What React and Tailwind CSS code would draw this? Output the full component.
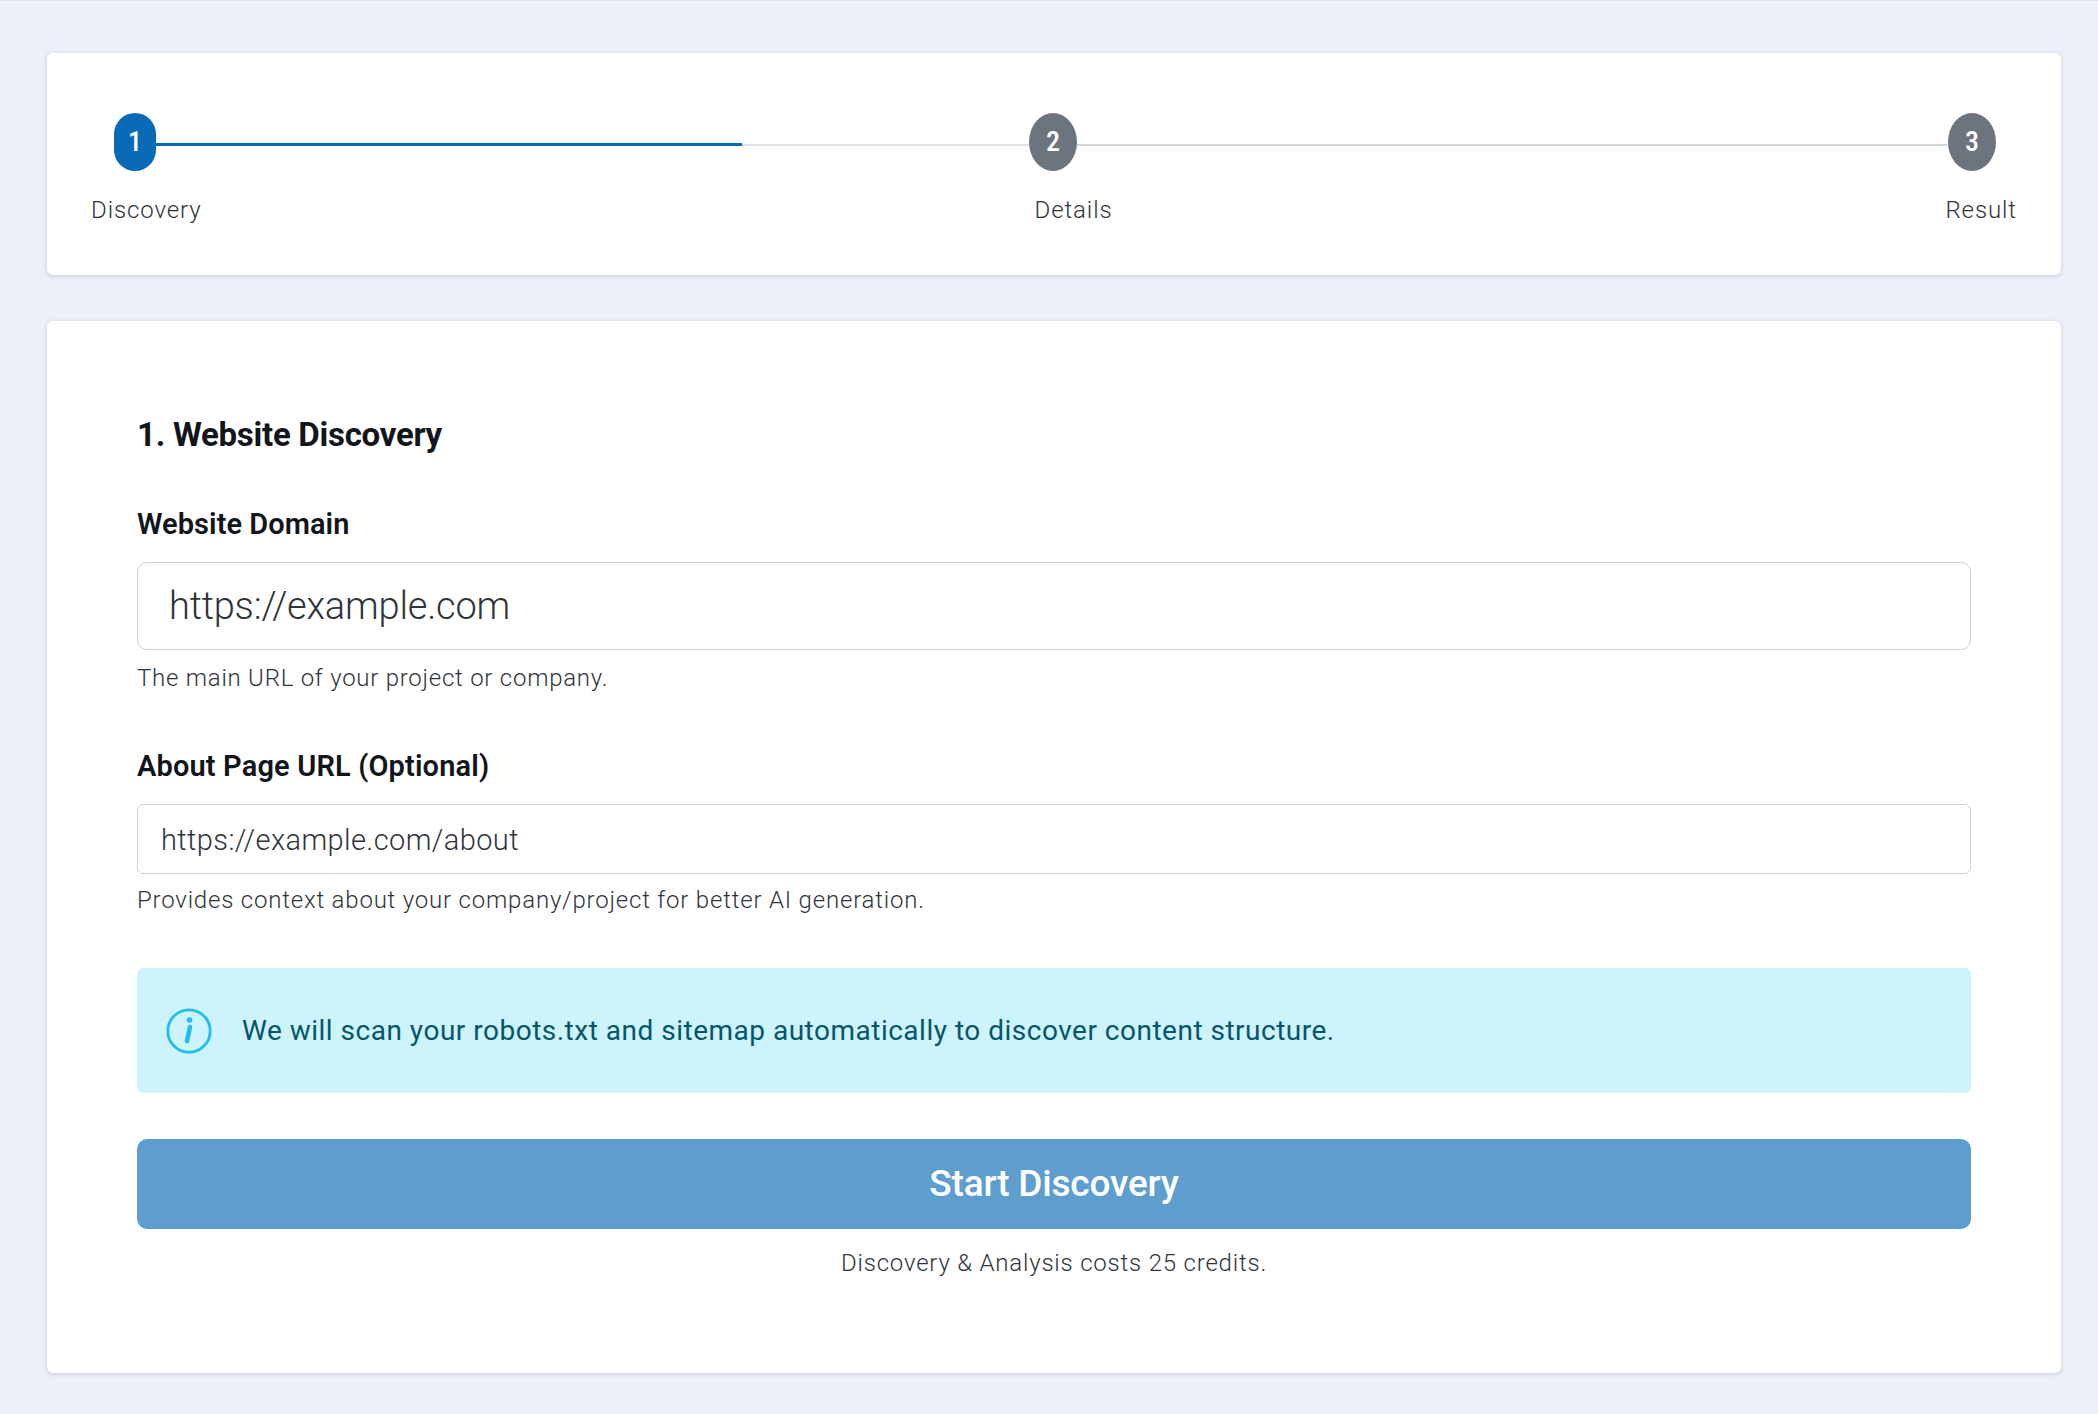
import React from 'react';

function StepDot({ n, active }) {
  return (
    <div className={active
      ? 'w-[42px] h-[58px] rounded-full bg-[#0a6ab8] text-white flex items-center justify-center text-[28px] font-medium font-stretch-[75%] shrink-0'
      : 'w-[48px] h-[58px] rounded-[50%] bg-[#6c757d] text-white flex items-center justify-center text-[28px] font-medium font-stretch-[75%] shrink-0'}>
      {n}
    </div>
  );
}

function InfoIcon() {
  return (
    <svg viewBox="0 0 46 46" className="w-[46px] h-[46px] shrink-0" fill="none">
      <circle cx="23" cy="23" r="21.2" stroke="#1fbdf0" strokeWidth="2.8" />
      <circle cx="23.5" cy="12" r="2.8" fill="#1fbdf0" />
      <path d="M24 19 L21 33" stroke="#1fbdf0" strokeWidth="4.6" strokeLinecap="round" />
    </svg>
  );
}

export default function App() {
  return (
    <div className="min-h-screen bg-[#edf0f8] border-t border-[#dfe3ee] pl-[47px] pr-[37px] pt-[52px] pb-[41px] font-['Roboto',sans-serif] font-stretch-[88%] text-[#12161c]">
      {/* stepper */}
      <div className="h-[222px] bg-white rounded-md shadow-[0_1px_4px_rgba(120,130,150,0.35)] pt-[60px]">
        <div className="flex items-start pl-[67px] pr-[65px]">
          <StepDot n="1" active />
          <div className="h-[3px] w-[586px] mt-[30px] bg-[#0a6ab8]" />
          <div className="h-[2px] w-[287px] mt-[31px] bg-[#dde2e8]" />
          <StepDot n="2" />
          <div className="h-[2px] flex-1 mt-[31px] bg-[#d5d9dd]" />
          <StepDot n="3" />
        </div>
        <div className="flex pl-[44px] pr-[44px] mt-[23px] text-[24px] leading-[32px] font-light text-[#2f343b] tracking-[0.9px]">
          <span>Discovery</span>
          <span className="ml-[833px]">Details</span>
          <span className="ml-auto">Result</span>
        </div>
      </div>

      {/* discovery form */}
      <div className="mt-[46px] h-[1052px] bg-white rounded-md shadow-[0_1px_4px_rgba(120,130,150,0.35)] px-[90px] pt-[93px]">
        <h2 className="text-[33px] leading-[42px] font-bold tracking-[-0.27px]">1. Website Discovery</h2>

        <label className="block mt-[50px] text-[29px] leading-[36px] font-semibold tracking-[0.05px]">Website Domain</label>
        <input placeholder="https://example.com" className="block w-full h-[88px] mt-[20px] px-[31px] border border-[#cdd3da] rounded-[10px] text-[38px] font-light outline-none placeholder:text-[#2f343b] tracking-[-0.2px]" />
        <p className="mt-[12px] text-[24px] leading-[32px] font-light text-[#2f343b] tracking-[0.75px]">The main URL of your project or company.</p>

        <label className="block mt-[54px] text-[29px] leading-[36px] font-semibold tracking-[0.15px]">About Page URL (Optional)</label>
        <input placeholder="https://example.com/about" className="block w-full h-[70px] mt-[20px] px-[23px] pt-[1px] border border-[#cdd3da] rounded-md text-[29px] font-light outline-none placeholder:text-[#2f343b] tracking-[0.4px]" />
        <p className="mt-[10px] text-[24px] leading-[32px] font-light text-[#2f343b] tracking-[0.8px]">Provides context about your company/project for better AI generation.</p>

        <div className="flex items-center gap-[30px] h-[125px] mt-[52px] pl-[29px] bg-[#cdf3fd] rounded-md text-[28px] tracking-[0.5px] text-[#05566a]">
          <InfoIcon />
          <span>We will scan your robots.txt and sitemap automatically to discover content structure.</span>
        </div>

        <button className="block w-full h-[90px] mt-[46px] bg-[#5e9ecf] rounded-[10px] text-white text-[37px] font-medium tracking-[-0.2px]">Start Discovery</button>
        <p className="mt-[18px] text-center text-[24px] leading-[32px] font-light text-[#2f343b] tracking-[0.8px]">Discovery &amp; Analysis costs 25 credits.</p>
      </div>
    </div>
  );
}
